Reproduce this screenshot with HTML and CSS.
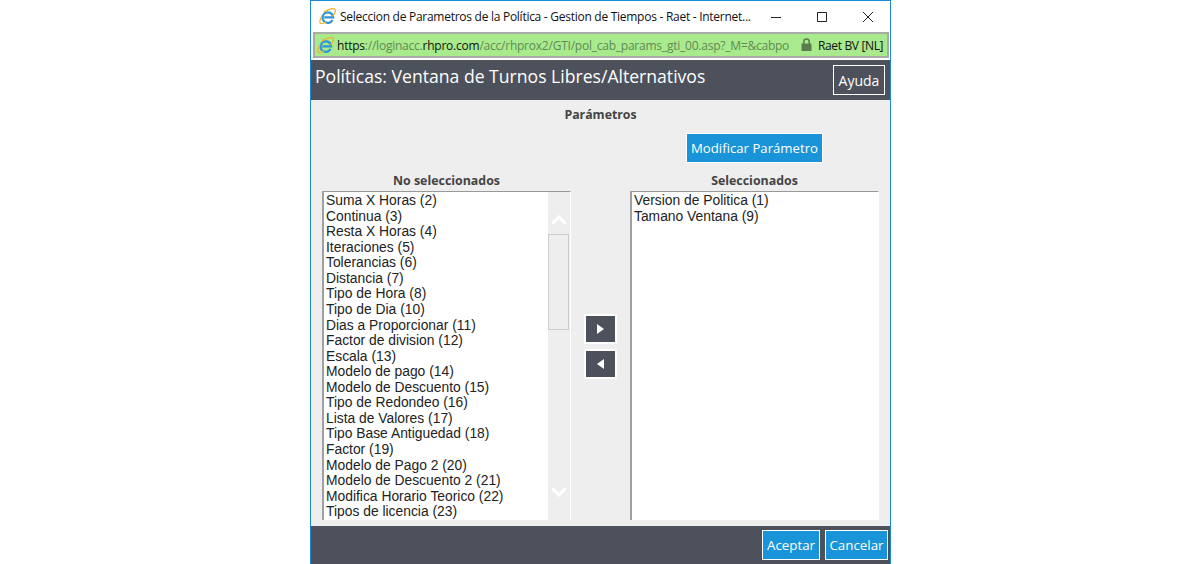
FILE: index.html
```html
<!DOCTYPE html>
<html lang="es">
<head>
<meta charset="utf-8">
<title>Parámetros</title>
<link rel="stylesheet" href="styles.css">
</head>
<body>
<div class="window">
  <div class="titlebar">
    <svg class="ie" viewBox="0 0 18 18">
      <defs>
        <g id="ie">
          <path d="M14.300 12.800A5.600 5.600 0 1 1 14.700 8.500L14.900 10H5.500" fill="none" stroke="#2f94dc" stroke-width="2.400"/>
          <path d="M5 4.600C9 1.300 15 -.2 16.800 1.400C18.200 2.900 16.600 6 14.200 8.800M3.200 8C1 12 .4 15 1.500 16.200C2.500 17.100 5 16 7.600 14.500" fill="none" stroke="#f0b429" stroke-width="1.300"/>
        </g>
      </defs>
      <use href="#ie"/>
    </svg>
    <span class="title-text">Seleccion de Parametros de la Política - Gestion de Tiempos - Raet - Internet...</span>
    <div class="controls">
      <svg class="ctl" viewBox="0 0 46 20"><path d="M18 10.500h10" stroke="#222" fill="none"/></svg>
      <svg class="ctl" viewBox="0 0 46 20"><path d="M18.500 5.500h9v9h-9z" stroke="#222" fill="none"/></svg>
      <svg class="ctl" viewBox="0 0 46 20"><path d="M18 5l10 10M28 5L18 15" stroke="#222" fill="none"/></svg>
    </div>
  </div>
  <div class="addressbar">
    <svg class="ie" viewBox="0 0 18 18"><use href="#ie"/></svg>
    <span class="url"><span class="dark">https</span>://loginacc.<span class="dark">rhpro.com</span>/acc/rhprox2/GTI/pol_cab_params_gti_00.asp?_M=&amp;cabpo</span>
    <svg class="lock" viewBox="0 0 11 13"><path d="M2.800 6V3.700a2.700 2.700 0 0 1 5.400 0V6" fill="none" stroke="#5a7a50" stroke-width="1.500"/><rect x=".5" y="5.500" width="10" height="7.500" rx=".6" fill="#5a7a50"/></svg>
    <span class="cert">Raet BV [NL]</span>
  </div>
  <header class="header">
    <h1 class="heading">Políticas: Ventana de Turnos Libres/Alternativos</h1>
    <button class="help">Ayuda</button>
  </header>
  <main class="content">
    <div class="section-title">Parámetros</div>
    <div class="modify-row"><button class="primary modify">Modificar Parámetro</button></div>
    <div class="columns">
      <section class="col">
        <div class="col-label">No seleccionados</div>
        <div class="listbox">
          <ul class="items">
            <li>Suma X Horas (2)</li><li>Continua (3)</li><li>Resta X Horas (4)</li><li>Iteraciones (5)</li>
            <li>Tolerancias (6)</li><li>Distancia (7)</li><li>Tipo de Hora (8)</li><li>Tipo de Dia (10)</li>
            <li>Dias a Proporcionar (11)</li><li>Factor de division (12)</li><li>Escala (13)</li><li>Modelo de pago (14)</li>
            <li>Modelo de Descuento (15)</li><li>Tipo de Redondeo (16)</li><li>Lista de Valores (17)</li><li>Tipo Base Antiguedad (18)</li>
            <li>Factor (19)</li><li>Modelo de Pago 2 (20)</li><li>Modelo de Descuento 2 (21)</li><li>Modifica Horario Teorico (22)</li>
            <li>Tipos de licencia (23)</li>
          </ul>
          <div class="scrollbar">
            <svg class="chev chev-up" viewBox="0 0 16 10"><path d="M1.200 8.800L8 2l6.800 6.800" fill="none" stroke="#fff" stroke-width="3"/></svg>
            <div class="thumb"></div>
            <svg class="chev chev-down" viewBox="0 0 16 10"><path d="M1.200 1.200L8 8l6.800-6.800" fill="none" stroke="#fff" stroke-width="3"/></svg>
          </div>
        </div>
      </section>
      <div class="movers">
        <button class="mover"><svg viewBox="0 0 7 10"><path d="M0 0l7 5-7 5z" fill="#fff"/></svg></button>
        <button class="mover"><svg viewBox="0 0 7 10"><path d="M7 0L0 5l7 5z" fill="#fff"/></svg></button>
      </div>
      <section class="col">
        <div class="col-label">Seleccionados</div>
        <div class="listbox">
          <ul class="items">
            <li>Version de Politica (1)</li><li>Tamano Ventana (9)</li>
          </ul>
        </div>
      </section>
    </div>
  </main>
  <footer class="footer">
    <button class="primary accept">Aceptar</button>
    <button class="primary cancel">Cancelar</button>
  </footer>
</div>
</body>
</html>
```
FILE: styles.css
```css
* { box-sizing: border-box; }
html, body { height: 100%; }
body {
  margin: 0 0 0 310px;
  background: #fff;
  overflow: hidden;
}
.window {
  width: 581px;
  height: 564px;
  border-left: 1px solid #1a8ad8;
  border-right: 1px solid #1a8ad8;
  border-top: 1px solid #1a8ad8;
  display: flex;
  flex-direction: column;
  background: #fff;
}
.titlebar {
  height: 31px;
  display: flex;
  align-items: center;
  padding-left: 8px;
  flex: none;
}
.ie { flex: none; display: block; width: 17px; height: 17px; }
.title-text {
  margin-left: 4px;
  font: 12px "Open Sans", "Liberation Sans", sans-serif;
  color: #111;
  white-space: nowrap;
  width: 405px;
  letter-spacing: -0.27px;
}
.controls { display: flex; margin-left: 8px; }
.ctl { width: 46px; height: 20px; display: block; }
.addressbar {
  height: 26px;
  flex: none;
  margin: 0 1px 2px 2px;
  border: 2px solid #a9aba9;
  background: #a9ea8c;
  display: flex;
  align-items: center;
  padding-left: 2px;
}
.url {
  margin-left: 3px;
  font: 12px "Open Sans", "Liberation Sans", sans-serif;
  color: #5f8a58;
  white-space: nowrap;
  width: 464px;
  letter-spacing: -0.23px;
}
.dark { color: #111; }
.lock { width: 11px; height: 13px; flex: none; margin-top: -1px; }
.cert {
  margin-left: 6px;
  font: 12px "Open Sans", "Liberation Sans", sans-serif;
  color: #111;
  white-space: nowrap;
  letter-spacing: -0.35px;
}
.header {
  height: 40px;
  flex: none;
  background: #4d515c;
  display: flex;
  justify-content: space-between;
  align-items: flex-start;
  padding: 5px 5px 0 4px;
}
.heading {
  margin: 0;
  font: 400 17.6px/22px "Open Sans", "Noto Sans", sans-serif;
  color: #fff;
}
.help {
  width: 52px;
  height: 30px;
  background: #4d515c;
  border: 1px solid #fff;
  color: #fff;
  font: 14px "Open Sans", sans-serif;
  padding: 0;
}
.content {
  flex: 1;
  background: #eee;
  display: flex;
  flex-direction: column;
  min-height: 0;
}
.section-title {
  text-align: center;
  font: 700 12.3px/16px "Open Sans", sans-serif;
  color: #444;
  margin-top: 7px;
}
.modify-row {
  display: flex;
  justify-content: flex-end;
  padding-right: 67px;
  margin-top: 10px;
}
.primary {
  background: #1a94d8;
  color: #fff;
  border: 1px solid #fff;
  font: 13.2px "Open Sans", sans-serif;
  padding: 0;
}
.modify { width: 137px; height: 30px; }
.columns {
  display: flex;
  padding-left: 11px;
  margin-top: 7px;
  flex: 1;
  min-height: 0;
}
.col { width: 249px; display: flex; flex-direction: column; }
.col-label {
  text-align: center;
  font: 700 12.4px/17px "Open Sans", sans-serif;
  color: #444;
  height: 21px;
  padding-top: 2px;
}
.listbox {
  height: 329px;
  background: #fff;
  border-top: 1px solid #999;
  border-left: 2px solid #a0a0a0;
  border-right: 1px solid #fff;
  display: flex;
  justify-content: space-between;
}
.items {
  list-style: none;
  margin: 0;
  padding: 1px 0 0 2px;
  font: 13.85px/15.57px "Liberation Sans", Arial, sans-serif;
  color: #222;
  white-space: nowrap;
}
.scrollbar {
  width: 22px;
  background: #eee;
  height: 100%;
  position: relative;
}
.thumb {
  position: absolute;
  top: 42px;
  left: 0;
  width: 21px;
  height: 96px;
  border: 1px solid #ccc;
  background: #eee;
}
.chev { position: absolute; left: 3px; width: 16px; height: 10px; display: block; }
.chev-up { top: 23px; }
.chev-down { bottom: 23px; }
.movers {
  width: 59px;
  display: flex;
  flex-direction: column;
  align-items: center;
  padding-top: 144px;
  gap: 5px;
}
.mover {
  width: 33px;
  height: 30px;
  background: #4d515c;
  border: 2px solid #fff;
  padding: 0;
  display: flex;
  align-items: center;
  justify-content: center;
}
.mover svg { width: 7px; height: 10px; display: block; }
.footer {
  height: 38px;
  flex: none;
  background: #4d515c;
  display: flex;
  justify-content: flex-end;
  gap: 5px;
  padding: 4px 2px 0 0;
}
.footer .primary { height: 30px; font-size: 13.33px; }
.accept { width: 58px; }
.cancel { width: 63px; }
```
